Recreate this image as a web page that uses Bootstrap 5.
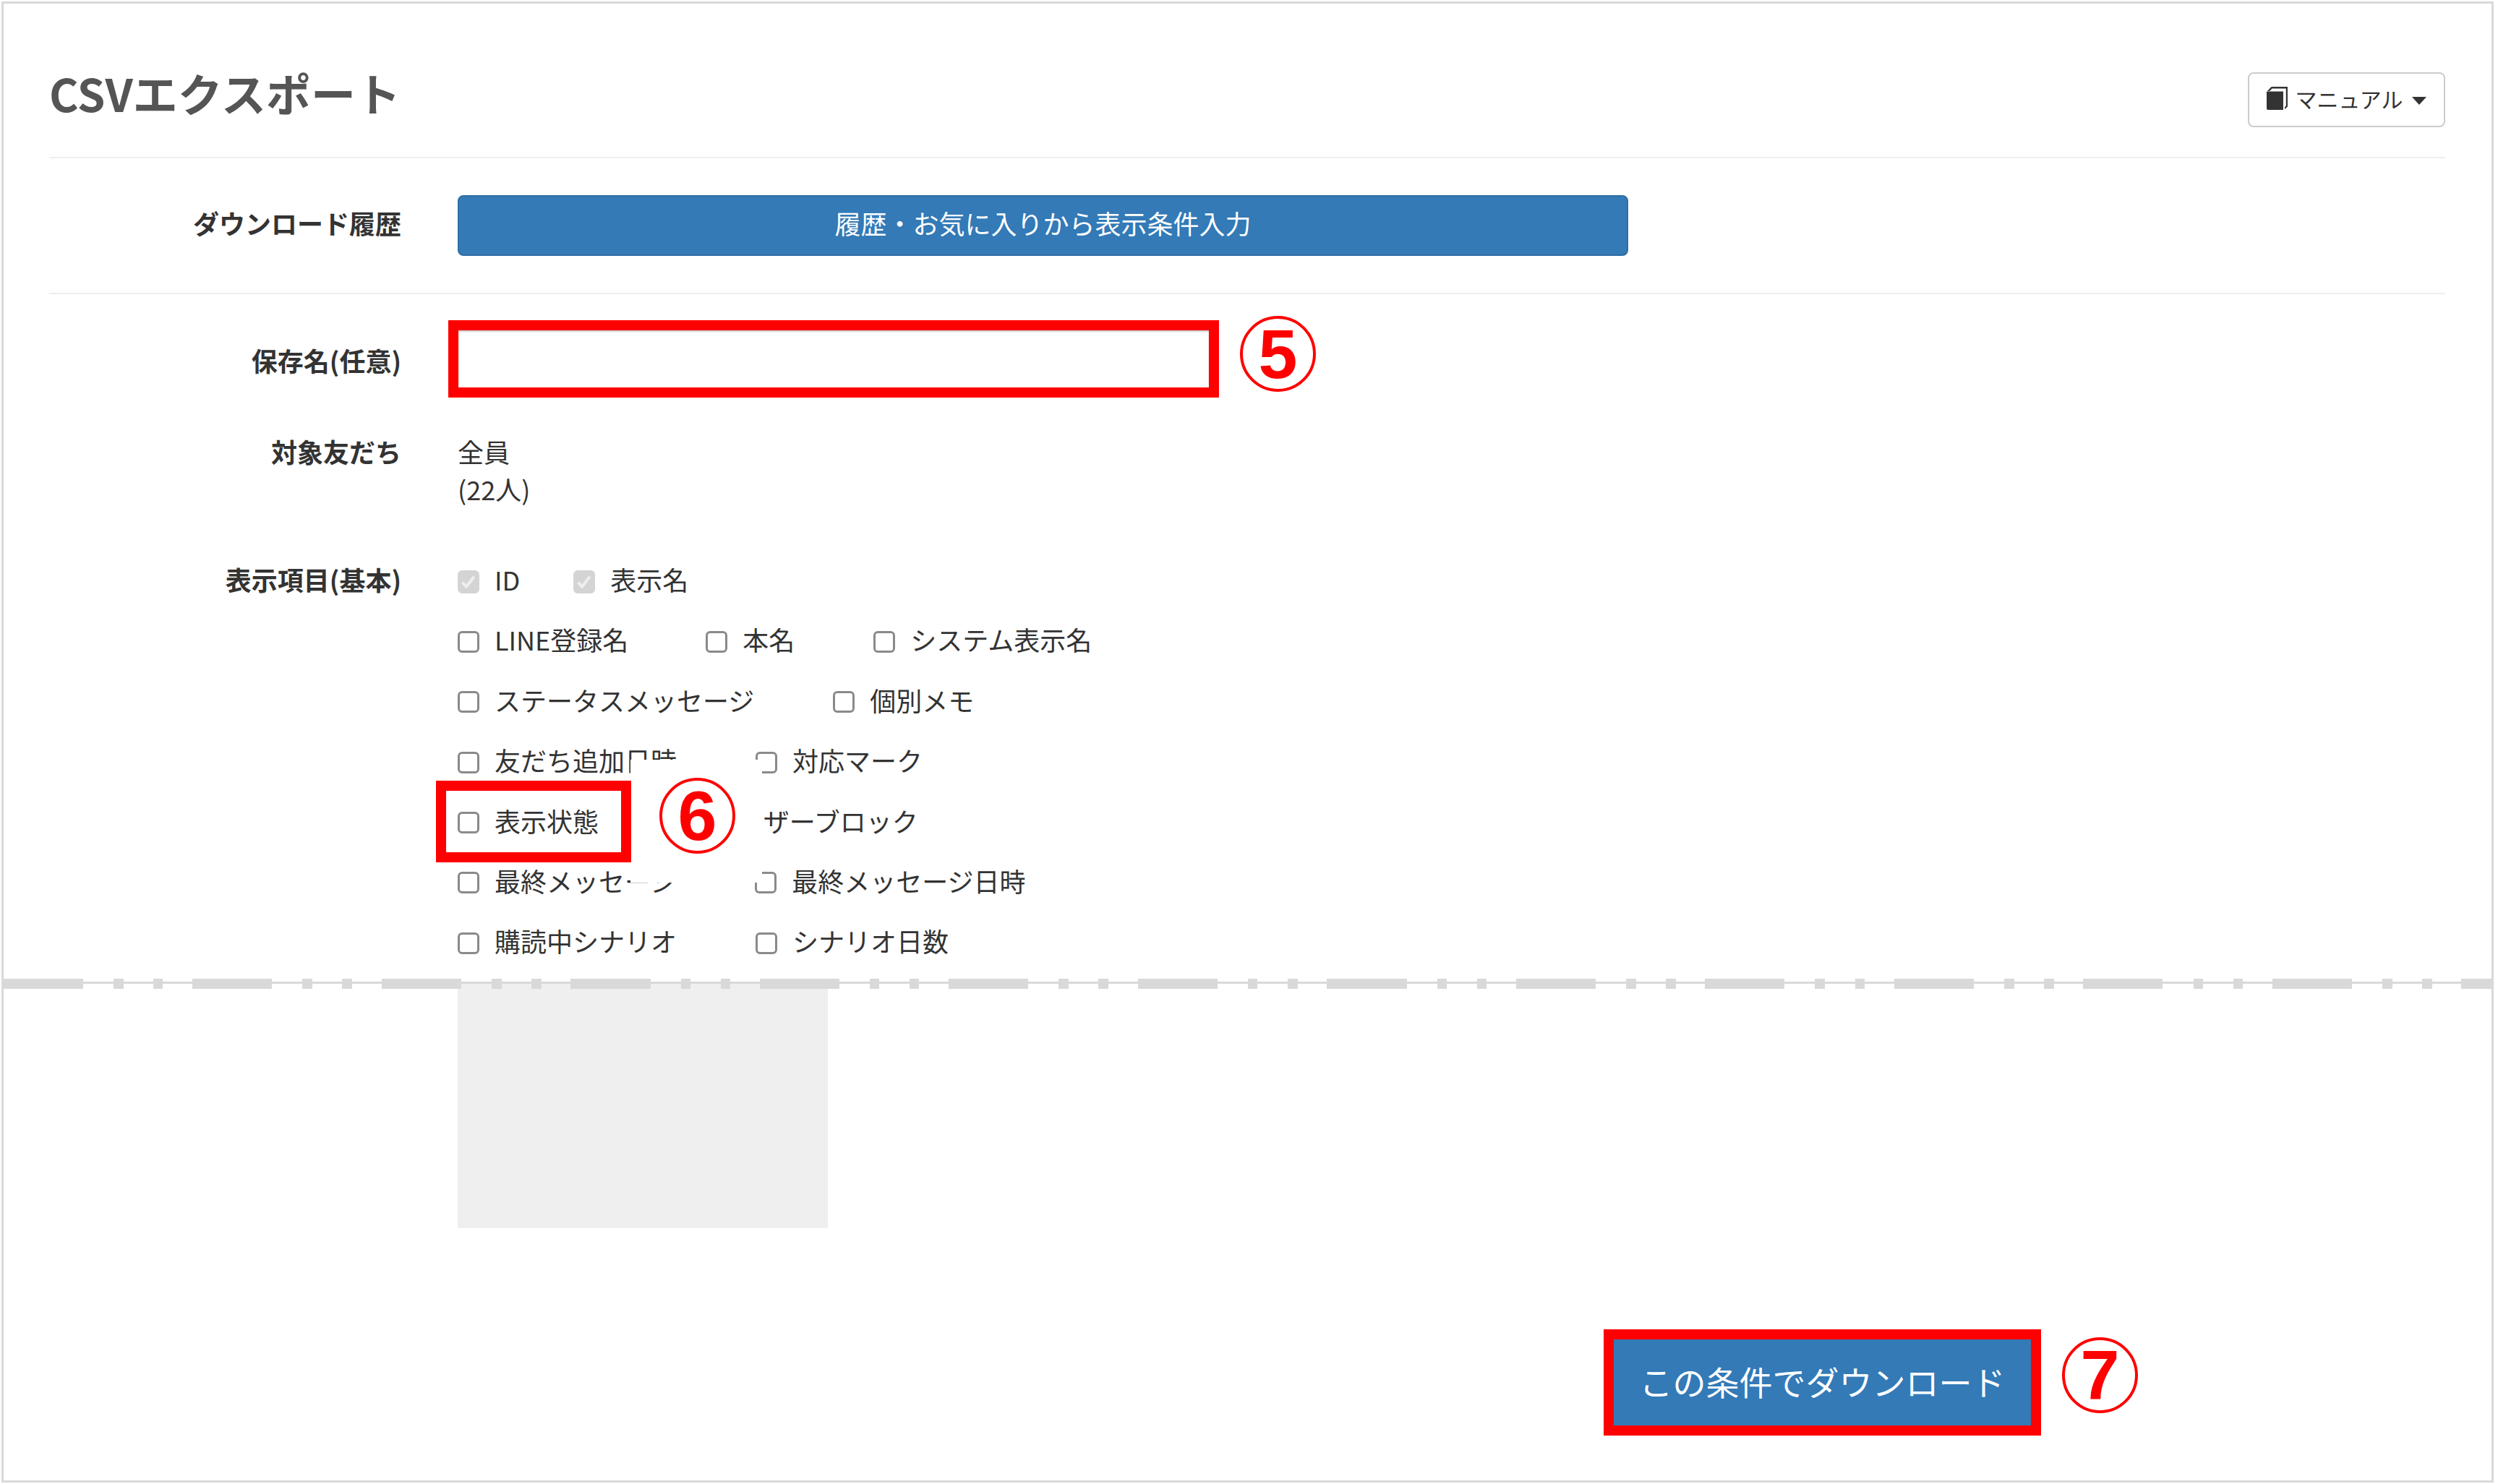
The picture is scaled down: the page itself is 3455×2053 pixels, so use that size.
<!DOCTYPE html>
<html lang="ja">
<head>
<meta charset="utf-8">
<title>CSVエクスポート</title>
<link href="https://cdn.jsdelivr.net/npm/bootstrap@5.3.0/dist/css/bootstrap.min.css" rel="stylesheet">
<style>
html, body { background: #fff; }
body { margin: 0; font-family: "Noto Sans CJK JP", "Liberation Sans", sans-serif; color: #333; font-size: 36px; line-height: 53px; }
.sheet { margin: 2px 6px 0 2px; height: 2049px; border: 3px solid #d9d9d9; padding: 0 64px 0 63px; position: relative; overflow: hidden; }
.page-head { padding-top: 95px; padding-bottom: 41px; border-bottom: 2px solid #eee; }
.page-title { font-size: 62px; line-height: 76px; font-weight: 700; color: #555; margin: -10px 0 0; }
.manual-btn { width: 273px; height: 76px; padding: 0 0 4px; border: 2px solid #ccc; border-radius: 8px; background: #fff; color: #333; font-size: 30px; line-height: 1; display: flex; align-items: center; justify-content: center; gap: 10px; }
.manual-btn.dropdown-toggle::after { border-top-width: 11px; border-left-width: 10px; border-right-width: 10px; border-bottom: 0; margin-left: 2px; margin-top: 6px; vertical-align: middle; }
.field-row { display: flex; gap: 78px; }
.field-label { flex: 0 0 487px; text-align: right; font-weight: 700; color: #333; margin: 0; }
.history-row { padding: 51px 0; border-bottom: 2px solid #eee; align-items: center; }
.history-row .field-label { padding-bottom: 8px; }
.history-btn { width: 1619px; height: 84px; padding: 0 0 8px; font-size: 36px; line-height: 1; background: #337ab7; border: 2px solid #2e6da4; border-radius: 8px; color: #fff; }
.name-row { padding-top: 36px; align-items: center; height: 143px; }
.name-row .field-label { margin-top: 4px; }
.name-frame { border: 14px solid #f00; margin-left: -13px; }
.name-input { display: block; width: 1038px; height: 79px; border: 0; border-radius: 0; padding: 0; box-shadow: inset 0 2px 2px rgba(0,0,0,.2); }
.num-ring { flex: none; width: 105px; height: 105px; border: 4px solid #f00; border-radius: 50%; background: #fff; color: #f00; font-family: "Liberation Sans", sans-serif; font-weight: 700; font-size: 97px; line-height: 97px; text-align: center; }
.name-ring { margin-left: 29px; margin-bottom: 15px; }
.target-row { margin-top: 48px; line-height: 52px; }
.items-row { margin-top: 76px; }
.items-row > .field-label { margin-top: -3px; }
.checks { position: relative; flex: 1; }
.check-line { display: flex; align-items: center; height: 53px; margin-bottom: 30.4px; white-space: nowrap; }
.check-item { display: flex; align-items: center; gap: 21px; margin-right: 109px; }
.check-item.gap-id { margin-right: 74px; }
.check-item.gap-line { margin-right: 107px; }
.check-item.gap-state { margin-right: 105.5px; }
.check-item label { padding-bottom: 6px; }
.check-item .form-check-input { width: 30px; height: 30px; margin: 0; flex: none; border: 3px solid #8a8a8a; border-radius: 6px; background-color: #fff; opacity: 1; }
.check-item .form-check-input:checked:disabled { height: 32px; background-color: #d4d4d4; border-color: #d4d4d4; opacity: 1; background-size: 100% 100%; background-image: url("data:image/svg+xml,%3csvg xmlns='http://www.w3.org/2000/svg' viewBox='0 0 20 20'%3e%3cpath fill='none' stroke='%23eee' stroke-width='3.4' d='M3 10.5l4.5 5L16.5 4'/%3e%3c/svg%3e"); }
.mask-patch { position: absolute; left: 239px; top: 273px; width: 182px; height: 170px; background: #fff; }
.mask-ring { position: absolute; left: 40px; top: 25px; }
.state-frame { position: absolute; left: -30px; top: 302px; width: 270px; height: 113px; border: 14px solid #f00; }
.lower { position: relative; margin-top: 30px; padding-left: 565px; }
.cut-line { position: absolute; left: -63px; right: -64px; top: -7px; height: 14px; }
.cut-thin { position: absolute; left: 0; right: 0; top: 4px; height: 3px; background: #d9d9d9; }
.cut-dash { position: absolute; inset: 0; background: repeating-linear-gradient(90deg, #d9d9d9 0, #d9d9d9 110px, transparent 110px, transparent 152px, #d9d9d9 152px, #d9d9d9 165.5px, transparent 165.5px, transparent 207px, #d9d9d9 207px, #d9d9d9 220.5px, transparent 220.5px, transparent 261.5px); }
.grey-block { width: 512px; height: 338px; background: #efefef; }
.submit-row { position: absolute; left: 2213px; top: 1834px; display: flex; align-items: center; }
.submit-frame { border: 14px solid #f00; }
.submit-btn { display: block; width: 577px; height: 119px; padding: 0 0 6px; border: 0; border-radius: 0; background: #337ab7; color: #fff; font-size: 46px; line-height: 1; }
.submit-ring { margin-left: 29px; margin-bottom: 20px; }
</style>
</head>
<body>
<div class="sheet">
  <header class="page-head d-flex justify-content-between align-items-start">
    <h1 class="page-title">CSVエクスポート</h1>
    <button type="button" class="btn manual-btn dropdown-toggle">
      <svg width="29" height="32" viewBox="0 0 29 32" aria-hidden="true"><path fill="#333" d="M0 6.5h23V32H2a2 2 0 0 1-2-2z"/><path fill="#333" d="M1 6L6 .5Q6.500 0 7.500 0H29v27.500L25 31v-3l1.800-1.500V2.500H7.500L4 6z"/></svg>
      <span>マニュアル</span>
    </button>
  </header>

  <div class="field-row history-row">
    <p class="field-label">ダウンロード履歴</p>
    <button type="button" class="btn btn-primary history-btn">履歴・お気に入りから表示条件入力</button>
  </div>

  <div class="field-row name-row">
    <label class="field-label">保存名(任意)</label>
    <div class="d-flex align-items-center">
      <div class="name-frame"><input type="text" class="form-control name-input" aria-label="保存名"></div>
      <div class="num-ring name-ring">5</div>
    </div>
  </div>

  <div class="field-row target-row">
    <p class="field-label">対象友だち</p>
    <div>全員<br>(22人)</div>
  </div>

  <div class="field-row items-row">
    <p class="field-label">表示項目(基本)</p>
    <div class="checks">
      <div class="check-line">
        <div class="check-item gap-id"><input class="form-check-input" type="checkbox" id="c1" checked disabled><label for="c1">ID</label></div>
        <div class="check-item"><input class="form-check-input" type="checkbox" id="c2" checked disabled><label for="c2">表示名</label></div>
      </div>
      <div class="check-line">
        <div class="check-item gap-line"><input class="form-check-input" type="checkbox" id="c3"><label for="c3">LINE登録名</label></div>
        <div class="check-item"><input class="form-check-input" type="checkbox" id="c4"><label for="c4">本名</label></div>
        <div class="check-item"><input class="form-check-input" type="checkbox" id="c5"><label for="c5">システム表示名</label></div>
      </div>
      <div class="check-line">
        <div class="check-item"><input class="form-check-input" type="checkbox" id="c6"><label for="c6">ステータスメッセージ</label></div>
        <div class="check-item"><input class="form-check-input" type="checkbox" id="c7"><label for="c7">個別メモ</label></div>
      </div>
      <div class="check-line">
        <div class="check-item"><input class="form-check-input" type="checkbox" id="c8"><label for="c8">友だち追加日時</label></div>
        <div class="check-item"><input class="form-check-input" type="checkbox" id="c9"><label for="c9">対応マーク</label></div>
      </div>
      <div class="check-line">
        <div class="check-item gap-state"><input class="form-check-input" type="checkbox" id="c10"><label for="c10">表示状態</label></div>
        <div class="check-item"><input class="form-check-input" type="checkbox" id="c11"><label for="c11">ユーザーブロック</label></div>
      </div>
      <div class="check-line">
        <div class="check-item"><input class="form-check-input" type="checkbox" id="c12"><label for="c12">最終メッセージ</label></div>
        <div class="check-item"><input class="form-check-input" type="checkbox" id="c13"><label for="c13">最終メッセージ日時</label></div>
      </div>
      <div class="check-line mb-0">
        <div class="check-item"><input class="form-check-input" type="checkbox" id="c14"><label for="c14">購読中シナリオ</label></div>
        <div class="check-item"><input class="form-check-input" type="checkbox" id="c15"><label for="c15">シナリオ日数</label></div>
      </div>
      <div class="mask-patch"><div class="num-ring mask-ring">6</div></div>
      <div class="state-frame"></div>
    </div>
  </div>

  <div class="lower">
    <div class="grey-block"></div>
    <div class="cut-line"><div class="cut-thin"></div><div class="cut-dash"></div></div>
  </div>

  <div class="submit-row">
    <div class="submit-frame"><button type="button" class="btn btn-primary submit-btn">この条件でダウンロード</button></div>
    <div class="num-ring submit-ring">7</div>
  </div>
</div>
<script src="https://cdn.jsdelivr.net/npm/bootstrap@5.3.0/dist/js/bootstrap.bundle.min.js"></script>
</body>
</html>
